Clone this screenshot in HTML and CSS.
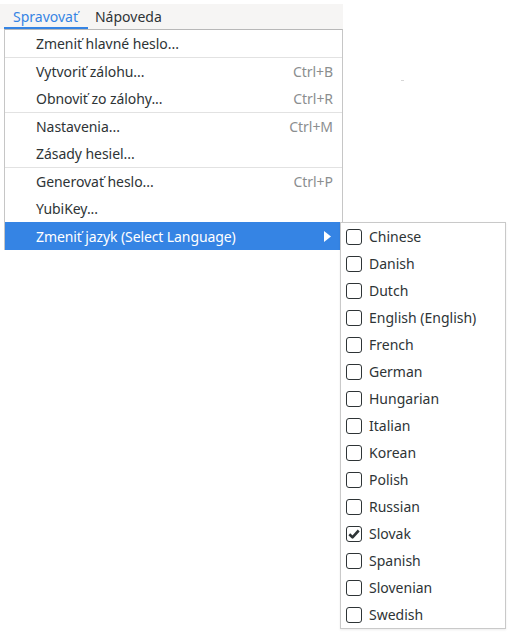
FILE: index.html
```html
<!DOCTYPE html>
<html>
<head>
<meta charset="utf-8">
<link rel="stylesheet" href="styles.css">
</head>
<body>
<div class="menubar">
  <span class="mb-item active">Spravovať</span>
  <span class="mb-item">Nápoveda</span>
</div>
<span class="speck"></span>
<div class="menu">
  <div class="item"><span class="label">Zmeniť hlavné heslo...</span></div>
  <div class="sep"></div>
  <div class="item"><span class="label">Vytvoriť zálohu...</span><span class="accel">Ctrl+B</span></div>
  <div class="item"><span class="label">Obnoviť zo zálohy...</span><span class="accel">Ctrl+R</span></div>
  <div class="sep"></div>
  <div class="item"><span class="label">Nastavenia...</span><span class="accel">Ctrl+M</span></div>
  <div class="item"><span class="label">Zásady hesiel...</span></div>
  <div class="sep"></div>
  <div class="item"><span class="label">Generovať heslo...</span><span class="accel">Ctrl+P</span></div>
  <div class="item"><span class="label">YubiKey...</span></div>
  <div class="item hl"><span class="label">Zmeniť jazyk (Select Language)</span><svg class="arrow" width="7" height="11" viewBox="0 0 7 11"><path d="M0 0 L7 5.5 L0 11 Z" fill="#fff"/></svg></div>
</div>
<div class="submenu">
  <div class="check-item"><span class="box"></span>Chinese</div>
  <div class="check-item"><span class="box"></span>Danish</div>
  <div class="check-item"><span class="box"></span>Dutch</div>
  <div class="check-item"><span class="box"></span>English (English)</div>
  <div class="check-item"><span class="box"></span>French</div>
  <div class="check-item"><span class="box"></span>German</div>
  <div class="check-item"><span class="box"></span>Hungarian</div>
  <div class="check-item"><span class="box"></span>Italian</div>
  <div class="check-item"><span class="box"></span>Korean</div>
  <div class="check-item"><span class="box"></span>Polish</div>
  <div class="check-item"><span class="box"></span>Russian</div>
  <div class="check-item"><span class="box checked"><svg width="14" height="14" viewBox="0 0 14 14"><path d="M2.3 7.3 L5.5 10.3 L11.7 3.5" fill="none" stroke="#2e3436" stroke-width="2.6" stroke-linejoin="round"/></svg></span>Slovak</div>
  <div class="check-item"><span class="box"></span>Spanish</div>
  <div class="check-item"><span class="box"></span>Slovenian</div>
  <div class="check-item"><span class="box"></span>Swedish</div>
</div>
</body>
</html>
```

FILE: styles.css
```css
html, body {
  margin: 0;
  padding: 0;
  background: #ffffff;
}
body {
  font-family: "Noto Sans", "Open Sans", sans-serif;
  font-size: 14px;
  color: #2e3436;
  width: 513px;
  height: 634px;
  position: relative;
  overflow: hidden;
}
.menubar {
  margin-top: 4px;
  width: 343px;
  height: 25px;
  background: #f6f5f4;
  display: flex;
  align-items: stretch;
  padding-left: 4px;
  box-sizing: border-box;
}
.mb-item {
  display: flex;
  align-items: center;
  line-height: 1;
  box-sizing: border-box;
}
.mb-item.active {
  color: #3584e4;
  border-bottom: 2px solid #3584e4;
  padding: 2px 10px 0 9px;
}
.mb-item:not(.active) {
  padding: 0 8px 0 7px;
}
.speck {
  position: absolute;
  left: 401px;
  top: 80px;
  width: 3px;
  height: 1px;
  background: #d6d6d6;
}
.menu {
  position: absolute;
  left: 4px;
  top: 29px;
  width: 339px;
  box-sizing: border-box;
  background: #fff;
  border: 1px solid #c6c6c6;
  border-top-color: #b8b8b8;
}
.item {
  height: 27px;
  display: flex;
  align-items: center;
  padding: 0 9px 0 31px;
  letter-spacing: -0.05px;
}
.item .label {
  flex: 1;
}
.accel {
  color: #8b8e8f;
}
.sep {
  height: 1px;
  background: #e2e2e2;
}
.item.hl {
  background: #3584e4;
  color: #ffffff;
  height: 28px;
  margin-bottom: -1px;
  letter-spacing: -0.1px;
}
.arrow {
  margin-right: 2px;
}
.submenu {
  position: absolute;
  left: 340px;
  top: 222px;
  width: 166px;
  box-sizing: border-box;
  background: #fff;
  border: 1px solid #c9c9c9;
  box-shadow: 0 1px 2px rgba(0,0,0,0.08);
}
.check-item {
  height: 27px;
  display: flex;
  align-items: center;
  padding-left: 5px;
}
.box {
  width: 16px;
  height: 16px;
  box-sizing: border-box;
  border: 1px solid #2e3436;
  border-radius: 3px;
  margin-right: 7px;
  display: flex;
  align-items: center;
  justify-content: center;
}
.box svg {
  display: block;
}
```
